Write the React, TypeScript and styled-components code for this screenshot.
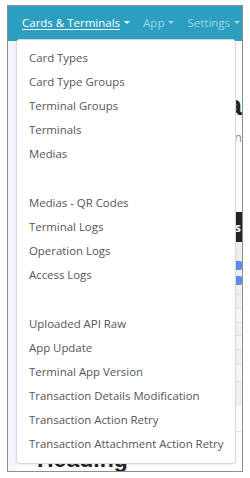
import React from 'react';
import styled, { createGlobalStyle } from 'styled-components';

const GlobalStyle = createGlobalStyle`
  html, body {
    margin: 0;
    padding: 0;
    background: #fff;
  }
  body {
    font-family: "Open Sans", "Liberation Sans", sans-serif;
  }
`;

const Frame = styled.div`
  position: relative;
  box-sizing: border-box;
  width: 236px;
  height: 467px;
  margin: 5px 0 0 7px;
  border: 1px solid #8e8e8e;
  overflow: hidden;
  display: flex;
  flex-direction: column;
`;

const Navbar = styled.nav`
  display: flex;
  align-items: center;
  height: 35px;
  padding: 0 0 3px 14px;
  box-sizing: border-box;
  background: #2c9fc0;
  flex-shrink: 0;
`;

const NavLink = styled.a<{ $active?: boolean }>`
  display: flex;
  align-items: center;
  margin-right: 13px;
  font-size: 11.5px;
  white-space: nowrap;
  color: ${(p) => (p.$active ? '#fff' : 'rgba(255, 255, 255, 0.55)')};
  text-decoration: ${(p) => (p.$active ? 'underline' : 'none')};
  text-underline-offset: 2px;
  &::after {
    content: '';
    margin-left: 4px;
    border-top: 3px solid currentColor;
    border-left: 3px solid transparent;
    border-right: 3px solid transparent;
  }
`;

const Body = styled.div`
  flex: 1;
  display: flex;
`;

const Strip = styled.div`
  width: 8px;
  background: #f3f5f8;
  flex-shrink: 0;
`;

const Content = styled.main`
  flex: 1;
  display: flex;
  flex-direction: column;
  background: #fff;
`;

const PageTitle = styled.h1`
  margin: 48px 0 0;
  font-family: "Liberation Sans", sans-serif;
  font-size: 28px;
  line-height: 34px;
  font-weight: 700;
  color: #222;
  text-align: right;
  white-space: nowrap;
`;

const Subtitle = styled.p`
  margin: 5px 0 0;
  font-size: 13px;
  line-height: 18px;
  color: #8a8a8a;
  text-align: right;
  white-space: nowrap;
`;

const Table = styled.div`
  margin-top: 66px;
  display: flex;
  flex-direction: column;
`;

const HeadRow = styled.div`
  height: 30px;
  display: flex;
  align-items: center;
  justify-content: flex-end;
  padding-right: 1px;
  background: #212529;
  color: #fff;
  font-size: 13px;
  font-weight: 700;
`;

const Row = styled.div<{ $h: number; $striped?: boolean }>`
  height: ${(p) => p.$h}px;
  box-sizing: border-box;
  border-top: 1px solid #e2e2e2;
  background: ${(p) => (p.$striped ? '#f2f2f2' : '#f7f7f7')};
`;

const ButtonRow = styled.div`
  height: 52px;
  box-sizing: border-box;
  padding-top: 19px;
  display: flex;
  flex-direction: column;
  gap: 6px;
  background: #f0f0f0;
`;

const ActionButton = styled.span`
  display: block;
  height: 9px;
  margin-left: 60px;
  background: #5a8dee;
  border-radius: 2px;
`;

const BlankRow = styled.div`
  height: 25px;
  border-bottom: 1px solid #e2e2e2;
  background: #fff;
`;

const SectionHeading = styled.h2`
  margin: 12px 0 0 21px;
  font-family: "Liberation Sans", sans-serif;
  font-size: 23px;
  line-height: 30px;
  font-weight: 700;
  color: #222;
`;

const Menu = styled.div`
  position: absolute;
  left: 8px;
  top: 33px;
  width: 220px;
  box-sizing: border-box;
  padding: 5px 0 8px;
  background: #fff;
  border: 1px solid rgba(0, 0, 0, 0.15);
  border-radius: 4px;
  box-shadow: 0 1px 3px rgba(0, 0, 0, 0.08);
`;

const MenuItem = styled.a`
  display: flex;
  align-items: center;
  height: 24px;
  padding: 0 12px;
  font-size: 11.4px;
  color: #555;
  white-space: nowrap;
`;

const Spacer = styled.div<{ $h: number }>`
  height: ${(p) => p.$h}px;
`;

const groups = [
  ['Card Types', 'Card Type Groups', 'Terminal Groups', 'Terminals', 'Medias'],
  ['Medias - QR Codes', 'Terminal Logs', 'Operation Logs', 'Access Logs'],
  [
    'Uploaded API Raw',
    'App Update',
    'Terminal App Version',
    'Transaction Details Modification',
    'Transaction Action Retry',
    'Transaction Attachment Action Retry',
  ],
];

const rowHeights = [14, 14, 13, 14, 15, 17, 25];

export default function App() {
  return (
    <>
      <GlobalStyle />
      <Frame>
        <Navbar>
          <NavLink $active>Cards &amp; Terminals</NavLink>
          <NavLink>App</NavLink>
          <NavLink>Settings</NavLink>
        </Navbar>
        <Body>
          <Strip />
          <Content>
            <PageTitle>Terminal Media</PageTitle>
            <Subtitle>Manage configuration</Subtitle>
            <Table>
              <HeadRow>Actions</HeadRow>
              <ButtonRow>
                <ActionButton />
                <ActionButton />
              </ButtonRow>
              {rowHeights.map((h, i) => (
                <Row key={i} $h={h} $striped={i % 2 === 0} />
              ))}
              <BlankRow />
            </Table>
            <SectionHeading>Heading</SectionHeading>
          </Content>
        </Body>
        <Menu>
          {groups.map((items, gi) => (
            <React.Fragment key={gi}>
              {gi > 0 && <Spacer $h={25} />}
              {items.map((label) => (
                <MenuItem key={label}>{label}</MenuItem>
              ))}
            </React.Fragment>
          ))}
        </Menu>
      </Frame>
    </>
  );
}
